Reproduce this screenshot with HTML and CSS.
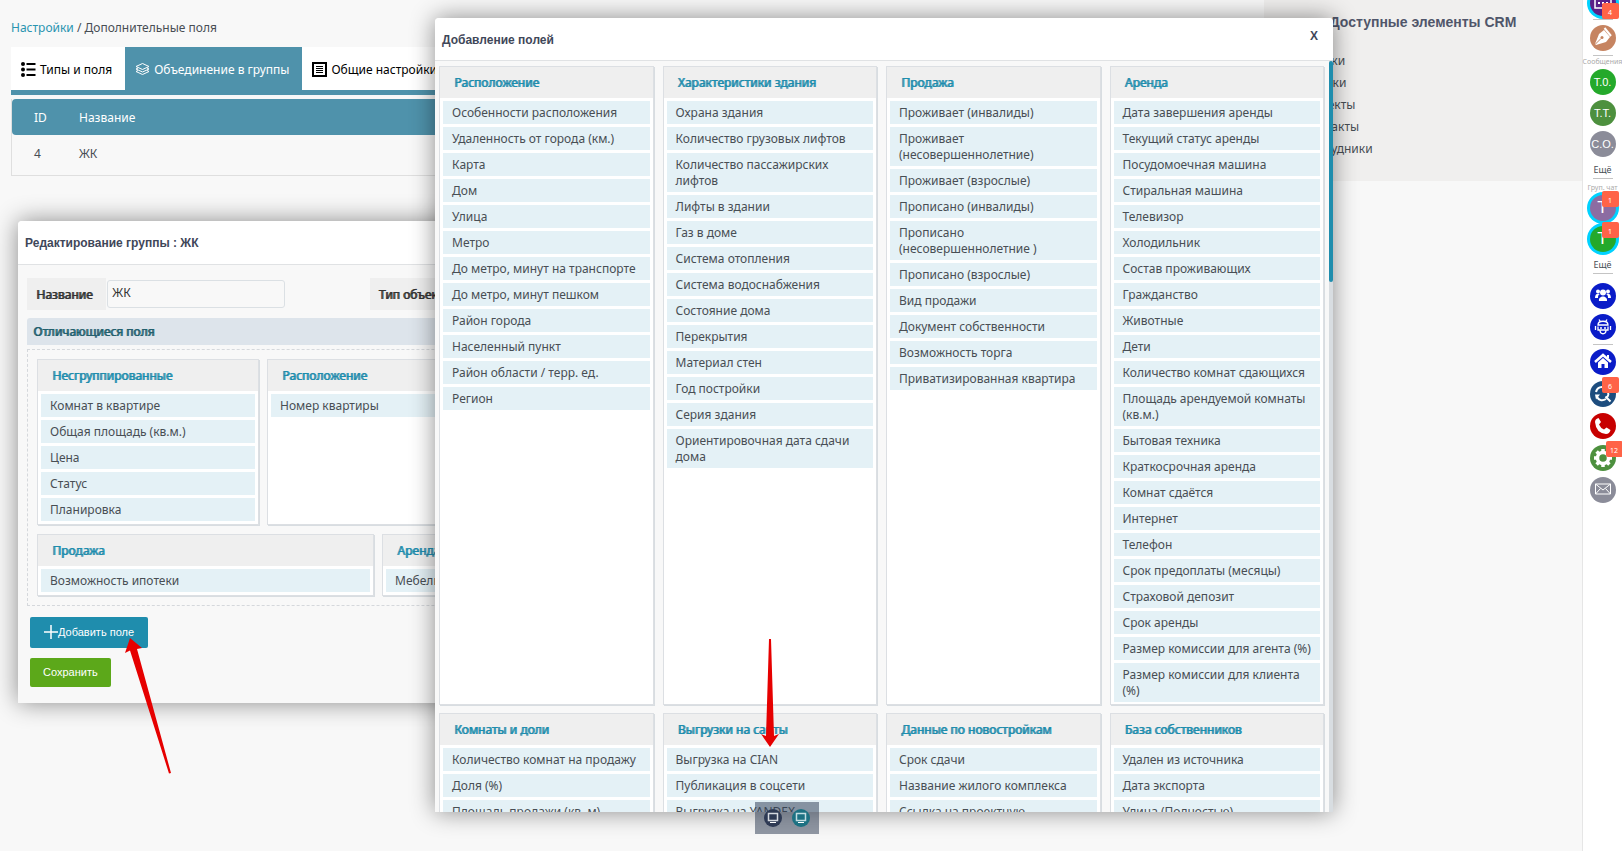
FILE: index.html
```html
<!DOCTYPE html>
<html lang="ru">
<head>
<meta charset="utf-8">
<title>Дополнительные поля</title>
<link rel="stylesheet" href="styles.css">
</head>
<body>
<div class="layout">
  <main class="content">
    <nav class="breadcrumb"><a href="#">Настройки</a> / Дополнительные поля</nav>
    <div class="tabs">
      <button class="tab" type="button"><svg class="tab-icon" viewBox="0 0 15 15"><g fill="currentColor"><circle cx="2" cy="2" r="2"/><circle cx="2" cy="7.5" r="2"/><circle cx="2" cy="13" r="2"/><path d="M5.500 1h9v2h-9zM5.500 6.500h9v2h-9zM5.500 12h9v2h-9z"/></g></svg>Типы и поля</button>
      <button class="tab tab-active" type="button"><svg class="tab-icon" viewBox="0 0 15 15"><g fill="none" stroke="currentColor" stroke-linejoin="round"><path d="M7.500 1.500l6.500 3-6.500 3-6.500-3z"/><path d="M3 6l-2 1 6.500 3L14 7l-2-1M3 8.500l-2 1 6.500 3 6.500-3-2-1"/></g></svg>Объединение в группы</button>
      <button class="tab" type="button"><svg class="tab-icon" viewBox="0 0 15 15"><path d="M1 1h13v13H1z" fill="none" stroke="currentColor" stroke-width="2"/><path d="M4 4.500h7M4 6.500h7M4 8.500h7M4 10.500h7" stroke="currentColor"/></svg>Общие настройки</button>
    </div>
    <table class="groups">
      <thead><tr><th class="col-id">ID</th><th>Название</th></tr></thead>
      <tbody><tr><td>4</td><td>ЖК</td></tr></tbody>
    </table>
  </main>
  <aside class="crm">
    <h2>Доступные элементы CRM</h2>
    <ul><li>Заявки</li><li>Сделки</li><li>Объекты</li><li>Контакты</li><li>Сотрудники</li></ul>
  </aside>
  <aside class="rail">
    <button class="dot purple ring dot-first" type="button" aria-label="Календарь"><svg viewBox="0 0 26 26"><path d="M5 5h16v13H5z" fill="none" stroke="#fff" stroke-width="1.500"/><path d="M8 8h2v2H8zM12 8h2v2h-2zM16 8h2v2h-2zM8 12h2v2H8zM12 12h2v2h-2zM16 12h2v2h-2z" fill="#fff"/></svg><span class="badge badge-low">4</span></button>
    <hr class="hr-first">
    <button class="dot tan" type="button" aria-label="Перо"><svg viewBox="0 0 26 26"><path d="M14 5l6 7-4 5-10 3-1-1 4-10z" fill="#fff"/><path d="M14.500 3l6.500 8" stroke="#fff" stroke-width="2"/><path d="M5 19.500l6-6" stroke="#c68461"/><circle cx="12" cy="12.500" r="1.500" fill="#c68461"/></svg></button>
    <hr class="hr-tight">
    <span class="rail-label">Сообщения</span>
    <button class="dot green" type="button">Т.0.</button>
    <button class="dot olive" type="button">Т.Т.</button>
    <button class="dot gray" type="button">С.О.</button>
    <a class="more" href="#">Ещё</a>
    <hr class="hr-after-more">
    <span class="rail-label">Груп. чат</span>
    <button class="dot violet ring letter" type="button">Т<span class="badge">1</span></button>
    <button class="dot green ring letter" type="button">Т<span class="badge">1</span></button>
    <a class="more" href="#">Ещё</a>
    <hr class="hr-wide">
    <button class="dot blue" type="button" aria-label="Сотрудники"><svg viewBox="0 0 26 26"><g fill="#fff"><circle cx="13" cy="9.500" r="3"/><circle cx="8" cy="8.500" r="2"/><circle cx="18" cy="8.500" r="2"/><path d="M9 18c-1-6 9-6 8 0zM5 15c0-4 2-5 5-4-2 1-2 2-2 4zM21 15c0-4-2-5-5-4 2 1 2 2 2 4z"/></g></svg></button>
    <button class="dot blue" type="button" aria-label="Робот"><svg viewBox="0 0 26 26"><g fill="none" stroke="#fff" stroke-width="1.300"><path d="M8 11c0-5 10-5 10 0zM8 12.500v3.500h10v-3.500M5.500 12v4M20.500 12v4M10 16c0 5 6 5 6 0M9 5.500l1 1.500M17 5.500l-1 1.500"/></g><circle cx="11" cy="14" r="1" fill="#fff"/><circle cx="15" cy="14" r="1" fill="#fff"/></svg></button>
    <hr>
    <div class="rail-tools">
      <button class="dot blue" type="button" aria-label="Главная"><svg viewBox="0 0 26 26"><path d="M5 13l8-7 8 7" fill="none" stroke="#fff" stroke-width="2.500"/><path d="M8 13.500l5-4.500 5 4.500V19h-3.500v-4h-3v4H8zM17 6h2v3h-2z" fill="#fff"/></svg></button>
      <button class="dot navy" type="button" aria-label="Поиск"><svg viewBox="0 0 26 26"><g fill="none" stroke="#fff" stroke-width="2"><path d="M6 11c1-5 6-6 9-4M7 16c2 4 6 4 9 2M15.500 15.500l5 5"/><path d="M17 10c2 2 2 5-1 7"/></g><path d="M13 5l5 1-3 4zM5 13.500h5l-4 5z" fill="#fff"/></svg><span class="badge">6</span></button>
      <button class="dot red" type="button" aria-label="Звонки"><svg viewBox="0 0 26 26"><path d="M8.500 5l2.500 4-2 2.500q1.500 3.500 5 5l2.500-2 4 2.500q-1 4-4.500 4Q6 20 5 9q0-3 3.500-4z" fill="#fff"/></svg></button>
      <button class="dot olive" type="button" aria-label="Настройки"><svg viewBox="0 0 26 26"><circle cx="13" cy="13" r="5.500" fill="none" stroke="#fff" stroke-width="3.500"/><path d="M13 4v3M13 19v3M4 13h3M19 13h3M6.600 6.600l2 2M17.400 17.400l2 2M6.600 19.400l2-2M17.400 8.600l2-2" stroke="#fff" stroke-width="3.500"/></svg><span class="badge badge-right">12</span></button>
      <button class="dot gray" type="button" aria-label="Почта"><svg viewBox="0 0 26 26"><path d="M5.500 7h15v10h-15zM5.500 7l7.500 6 7.500-6M5.500 17l5-5.500M20.500 17l-5-5.500" fill="none" stroke="#fff"/></svg></button>
    </div>
  </aside>
</div>

<section class="window window-edit">
  <header class="window-head"><h1>Редактирование группы : ЖК</h1></header>
  <div class="edit-body">
    <div class="form-row">
      <div class="field"><label for="name">Название</label><input id="name" type="text" value="ЖК"></div>
      <div class="field"><span class="field-label">Тип объекта</span></div>
    </div>
    <h2 class="section-title">Отличающиеся поля</h2>
    <div class="drop-area">
      <div class="card-row">
        <div class="card"><h3>Несгруппированные</h3><ul><li>Комнат в квартире</li><li>Общая площадь (кв.м.)</li><li>Цена</li><li>Статус</li><li>Планировка</li></ul></div>
        <div class="card"><h3>Расположение</h3><ul><li>Номер квартиры</li></ul></div>
        <div class="card"></div>
      </div>
      <div class="card-row">
        <div class="card"><h3>Продажа</h3><ul><li>Возможность ипотеки</li></ul></div>
        <div class="card"><h3>Аренда</h3><ul><li>Мебель</li></ul></div>
      </div>
    </div>
    <div class="actions">
      <button class="btn btn-add" type="button"><svg viewBox="0 0 14 14"><path d="M7 0v14M0 7h14" stroke="#fff" stroke-width="1.500"/></svg>Добавить поле</button>
      <button class="btn btn-save" type="button">Сохранить</button>
    </div>
  </div>
</section>

<section class="window window-add">
  <header class="window-head"><h1>Добавление полей</h1><button class="close" type="button">X</button></header>
  <div class="add-body">
    <div class="card-grid">
      <div class="card"><h3>Расположение</h3><ul><li>Особенности расположения</li><li>Удаленность от города (км.)</li><li>Карта</li><li>Дом</li><li>Улица</li><li>Метро</li><li>До метро, минут на транспорте</li><li>До метро, минут пешком</li><li>Район города</li><li>Населенный пункт</li><li>Район области / терр. ед.</li><li>Регион</li></ul></div>
      <div class="card"><h3>Характеристики здания</h3><ul><li>Охрана здания</li><li>Количество грузовых лифтов</li><li>Количество пассажирских лифтов</li><li>Лифты в здании</li><li>Газ в доме</li><li>Система отопления</li><li>Система водоснабжения</li><li>Состояние дома</li><li>Перекрытия</li><li>Материал стен</li><li>Год постройки</li><li>Серия здания</li><li>Ориентировочная дата сдачи дома</li></ul></div>
      <div class="card"><h3>Продажа</h3><ul><li>Проживает (инвалиды)</li><li>Проживает (несовершеннолетние)</li><li>Проживает (взрослые)</li><li>Прописано (инвалиды)</li><li>Прописано (несовершеннолетние )</li><li>Прописано (взрослые)</li><li>Вид продажи</li><li>Документ собственности</li><li>Возможность торга</li><li>Приватизированная квартира</li></ul></div>
      <div class="card"><h3>Аренда</h3><ul><li>Дата завершения аренды</li><li>Текущий статус аренды</li><li>Посудомоечная машина</li><li>Стиральная машина</li><li>Телевизор</li><li>Холодильник</li><li>Состав проживающих</li><li>Гражданство</li><li>Животные</li><li>Дети</li><li>Количество комнат сдающихся</li><li>Площадь арендуемой комнаты (кв.м.)</li><li>Бытовая техника</li><li>Краткосрочная аренда</li><li>Комнат сдаётся</li><li>Интернет</li><li>Телефон</li><li>Срок предоплаты (месяцы)</li><li>Страховой депозит</li><li>Срок аренды</li><li>Размер комиссии для агента (%)</li><li>Размер комиссии для клиента (%)</li></ul></div>
      <div class="card"><h3>Комнаты и доли</h3><ul><li>Количество комнат на продажу</li><li>Доля (%)</li><li>Площадь продажи (кв. м)</li></ul></div>
      <div class="card"><h3>Выгрузки на сайты</h3><ul><li>Выгрузка на CIAN</li><li>Публикация в соцсети</li><li>Выгрузка на YANDEX</li></ul></div>
      <div class="card"><h3>Данные по новостройкам</h3><ul><li>Срок сдачи</li><li>Название жилого комплекса</li><li>Ссылка на проектную декларацию</li></ul></div>
      <div class="card"><h3>База собственников</h3><ul><li>Удален из источника</li><li>Дата экспорта</li><li>Улица (Полностью)</li></ul></div>
    </div>
    <div class="track"><div class="thumb"></div></div>
  </div>
</section>

<div class="dock">
  <button class="dock-btn dock-dark" type="button" aria-label="Экран 1"><svg viewBox="0 0 18 18"><path d="M4.500 4.500h9v7h-9z" fill="none" stroke="#d5d9df" stroke-width="1.500"/><path d="M6 13h6v1H6z" fill="#fff"/></svg></button>
  <button class="dock-btn dock-teal" type="button" aria-label="Экран 2"><svg viewBox="0 0 18 18"><path d="M4.500 4.500h9v7h-9z" fill="none" stroke="#c3dde1" stroke-width="1.500"/><path d="M6 13h6v1H6z" fill="#fff"/></svg></button>
</div>
<svg class="arrow arrow-add" viewBox="0 0 46 136"><path d="M5 0L17 10 12 11 46 135 44 135.500 5 12.500 0 15z" fill="#e60000"/></svg>
<svg class="arrow arrow-cian" viewBox="0 0 18 108"><path d="M8 0h2l3 97 5-2-9 13-9-13 5 2z" fill="#e60000"/></svg>
</body>
</html>
```

FILE: styles.css
```css
* { box-sizing: border-box; }
body {
  margin: 0;
  min-height: 100vh;
  overflow: hidden;
  background: #f8f8f8;
  color: #484e54;
  font: 12px/16px "Noto Sans", sans-serif;
}
h1, h2, h3, ul { margin: 0; padding: 0; }
ul { list-style: none; }
button { font: inherit; color: inherit; border: 0; padding: 0; background: none; }
a { color: inherit; text-decoration: none; }

.layout { display: flex; align-items: flex-start; min-height: 100vh; }
.content { flex: 1; padding: 20px 11px 0; }
.breadcrumb a { color: #2a94b0; }

.tabs { display: flex; margin-top: 11px; border-bottom: 5px solid #4f92ab; }
.tab { display: flex; align-items: center; gap: 4px; height: 43px; padding: 2px 13px 0 10px; background: #fff; color: #000; }
.tab-active { background: #4f92ab; color: #fff; }
.tab-icon { width: 15px; height: 15px; }

.groups { width: 100%; margin-top: 4px; border-collapse: separate; border-spacing: 0; border: solid #dfdfdf; border-width: 0 1px 1px; }
.groups th, .groups td { text-align: left; font-weight: 400; padding: 0 0 0 22px; }
.groups th { height: 36px; padding-top: 1px; background: #4f92ab; color: #fff; }
.groups th:first-child { border-radius: 4px 0 0 4px; }
.groups th:last-child { border-radius: 0 4px 4px 0; }
.groups td { height: 40px; padding-bottom: 3px; }
.groups .col-id { width: 45px; }

.crm { width: 318px; padding: 13px 40px 20px; background: #f0efee; }
.crm h2 { font: bold 14px/18px "Liberation Sans", sans-serif; color: #50566a; text-align: center; white-space: nowrap; }
.crm ul { margin-top: 19px; }
.crm li { line-height: 22px; }
.crm li:last-child { margin-bottom: 1px; }

.rail { display: flex; flex-direction: column; align-items: center; width: 40px; min-height: 100vh; background: #fff; border-left: 1px solid #e6e6e6; }
.rail hr { width: 20px; height: 1px; margin: 4px 0; border: 0; background: #c4c4c4; flex: none; }
.rail .hr-first { margin: 3px 0 5px; }
.rail .hr-tight { margin-bottom: 1px; }
.rail .hr-after-more { margin-top: 0; }
.rail .hr-wide { margin: 0 0 9px; }
.rail-label { margin-bottom: 2px; font-size: 7px; line-height: 10px; color: #aaa; white-space: nowrap; }
.more { padding: 1px 0; font-size: 9px; line-height: 14px; }
.rail-tools { display: flex; flex-direction: column; gap: 1px; }
.dot { position: relative; flex: none; width: 26px; height: 26px; margin-bottom: 5px; border-radius: 50%; color: #fff; font: 11px/26px "Liberation Sans", sans-serif; }
.dot svg { display: block; width: 26px; height: 26px; }
.dot:has(+ hr) { margin-bottom: 0; }
.dot-first { margin-top: -10px; }
.ring { box-shadow: 0 0 0 3px #00d2ff; }
.letter { font-size: 17px; }
.purple { background: #5a1f87; }
.tan { background: #c68461; }
.green { background: #24a92b; }
.olive { background: #4d903e; }
.gray { background: #8b8c99; }
.violet { background: #8c6ca2; }
.blue { background: #0a1cc8; }
.navy { background: #1d4d7e; }
.red { background: #c70000; }
.badge { position: absolute; left: 12px; top: -4px; width: 17px; height: 16px; border-radius: 2px; background: #ff6347; color: #fff; font: 7px/20px "Noto Sans", sans-serif; text-align: center; }
.badge-low { top: 13px; }
.badge-right { left: 16px; }

.window { position: absolute; background: #f8f8f8; border-radius: 4px 4px 0 0; box-shadow: 0 0 24px rgba(0, 0, 0, .45); }
.window-head { display: flex; justify-content: space-between; height: 43px; padding: 0 7px; background: #fff; border-bottom: 1px solid #e0e2e4; border-radius: 4px 4px 0 0; }
.window-head h1 { font: bold 12px/45px "Liberation Sans", sans-serif; color: #3f4759; }
.close { align-self: flex-start; margin: 9px 8px 0 0; font: bold 12px/18px "Liberation Sans", sans-serif; color: #3f4759; }

.window-edit { left: 18px; top: 221px; width: 44.4vw; }
.window-edit .window-head { height: 44px; }
.edit-body { padding: 13px 9px 16px; }
.form-row { display: grid; grid-template-columns: 1fr 1fr; gap: 9px; padding-right: 26px; }
.form-row .field { display: flex; align-items: center; gap: 1px; }
.field label, .field-label { padding: 9px 14px 7px 9px; background: #efefef; color: #333; }
.field label, .field-label, .section-title, .card h3 { font-size: 12px; font-weight: 400; text-shadow: 1px 0 0 currentColor; }
.field input { width: 178px; height: 28px; padding: 0 4px 3px; font: inherit; color: #333; background: #f8f8f8; border: 1px solid #dbe0e4; border-radius: 3px; }
.section-title { margin-top: 8px; padding: 6px 6px 5px; background: #dde4eb; border-radius: 3px 3px 0 0; color: #23606e; }
.drop-area { display: flex; flex-direction: column; gap: 9px; margin-top: 4px; padding: 9px; border: 1px dashed #d5d8dc; }
.card-row { display: flex; gap: 8px; }
.card-row .card { flex: 1; padding-bottom: 3px; }
.actions { display: flex; flex-direction: column; align-items: flex-start; gap: 10px; padding: 11px 3px 0; }
.btn { display: flex; align-items: center; border-radius: 2px; color: #fff; font: 11px/16px "Liberation Sans", sans-serif; }
.btn svg { width: 14px; height: 14px; }
.btn-add { padding: 7px 14px 8px; background: #1f8dad; }
.btn-save { padding: 6px 13px 7px; background: #5ca81a; }

.card { background: #fff; border: 1px solid #dcdfe3; box-shadow: 1px 1px 0 #d8dde1; min-width: 0; padding-bottom: 2px; }
.card h3 { padding: 8px 14px 7px; background: #efefef; color: #1f8dad; }
.card ul { display: flex; flex-direction: column; gap: 3px; padding: 3px; padding-bottom: 0; }
.card li { padding: 4px 9px 3px; background: #e4f1f6; }

.window-add { left: 435px; right: 289px; top: 18px; bottom: 39px; display: flex; flex-direction: column; }
.window-add .window-head { flex: none; }
.add-body { flex: 1; min-height: 0; display: flex; overflow: hidden; }
.card-grid { flex: 1; display: grid; grid-template-columns: repeat(4, 1fr); gap: 8px 9px; align-content: start; padding: 5px 5px 0 4px; }
.track { width: 4px; background: #d8dde1; }
.thumb { height: 29.4%; background: #1f8dad; border-radius: 2px; }

.dock { position: absolute; left: 755px; bottom: 17px; display: flex; gap: 10px; padding: 7px 9px; background: rgba(48, 62, 84, .52); }
.dock-btn { width: 18px; height: 18px; border-radius: 50%; }
.dock-btn svg { display: block; }
.dock-dark { background: #2e3a54; }
.dock-teal { background: #1d7182; }
.arrow { position: absolute; }
.arrow-add { left: 125px; top: 638px; width: 46px; height: 136px; }
.arrow-cian { left: 761px; top: 639px; width: 18px; height: 108px; }
```
